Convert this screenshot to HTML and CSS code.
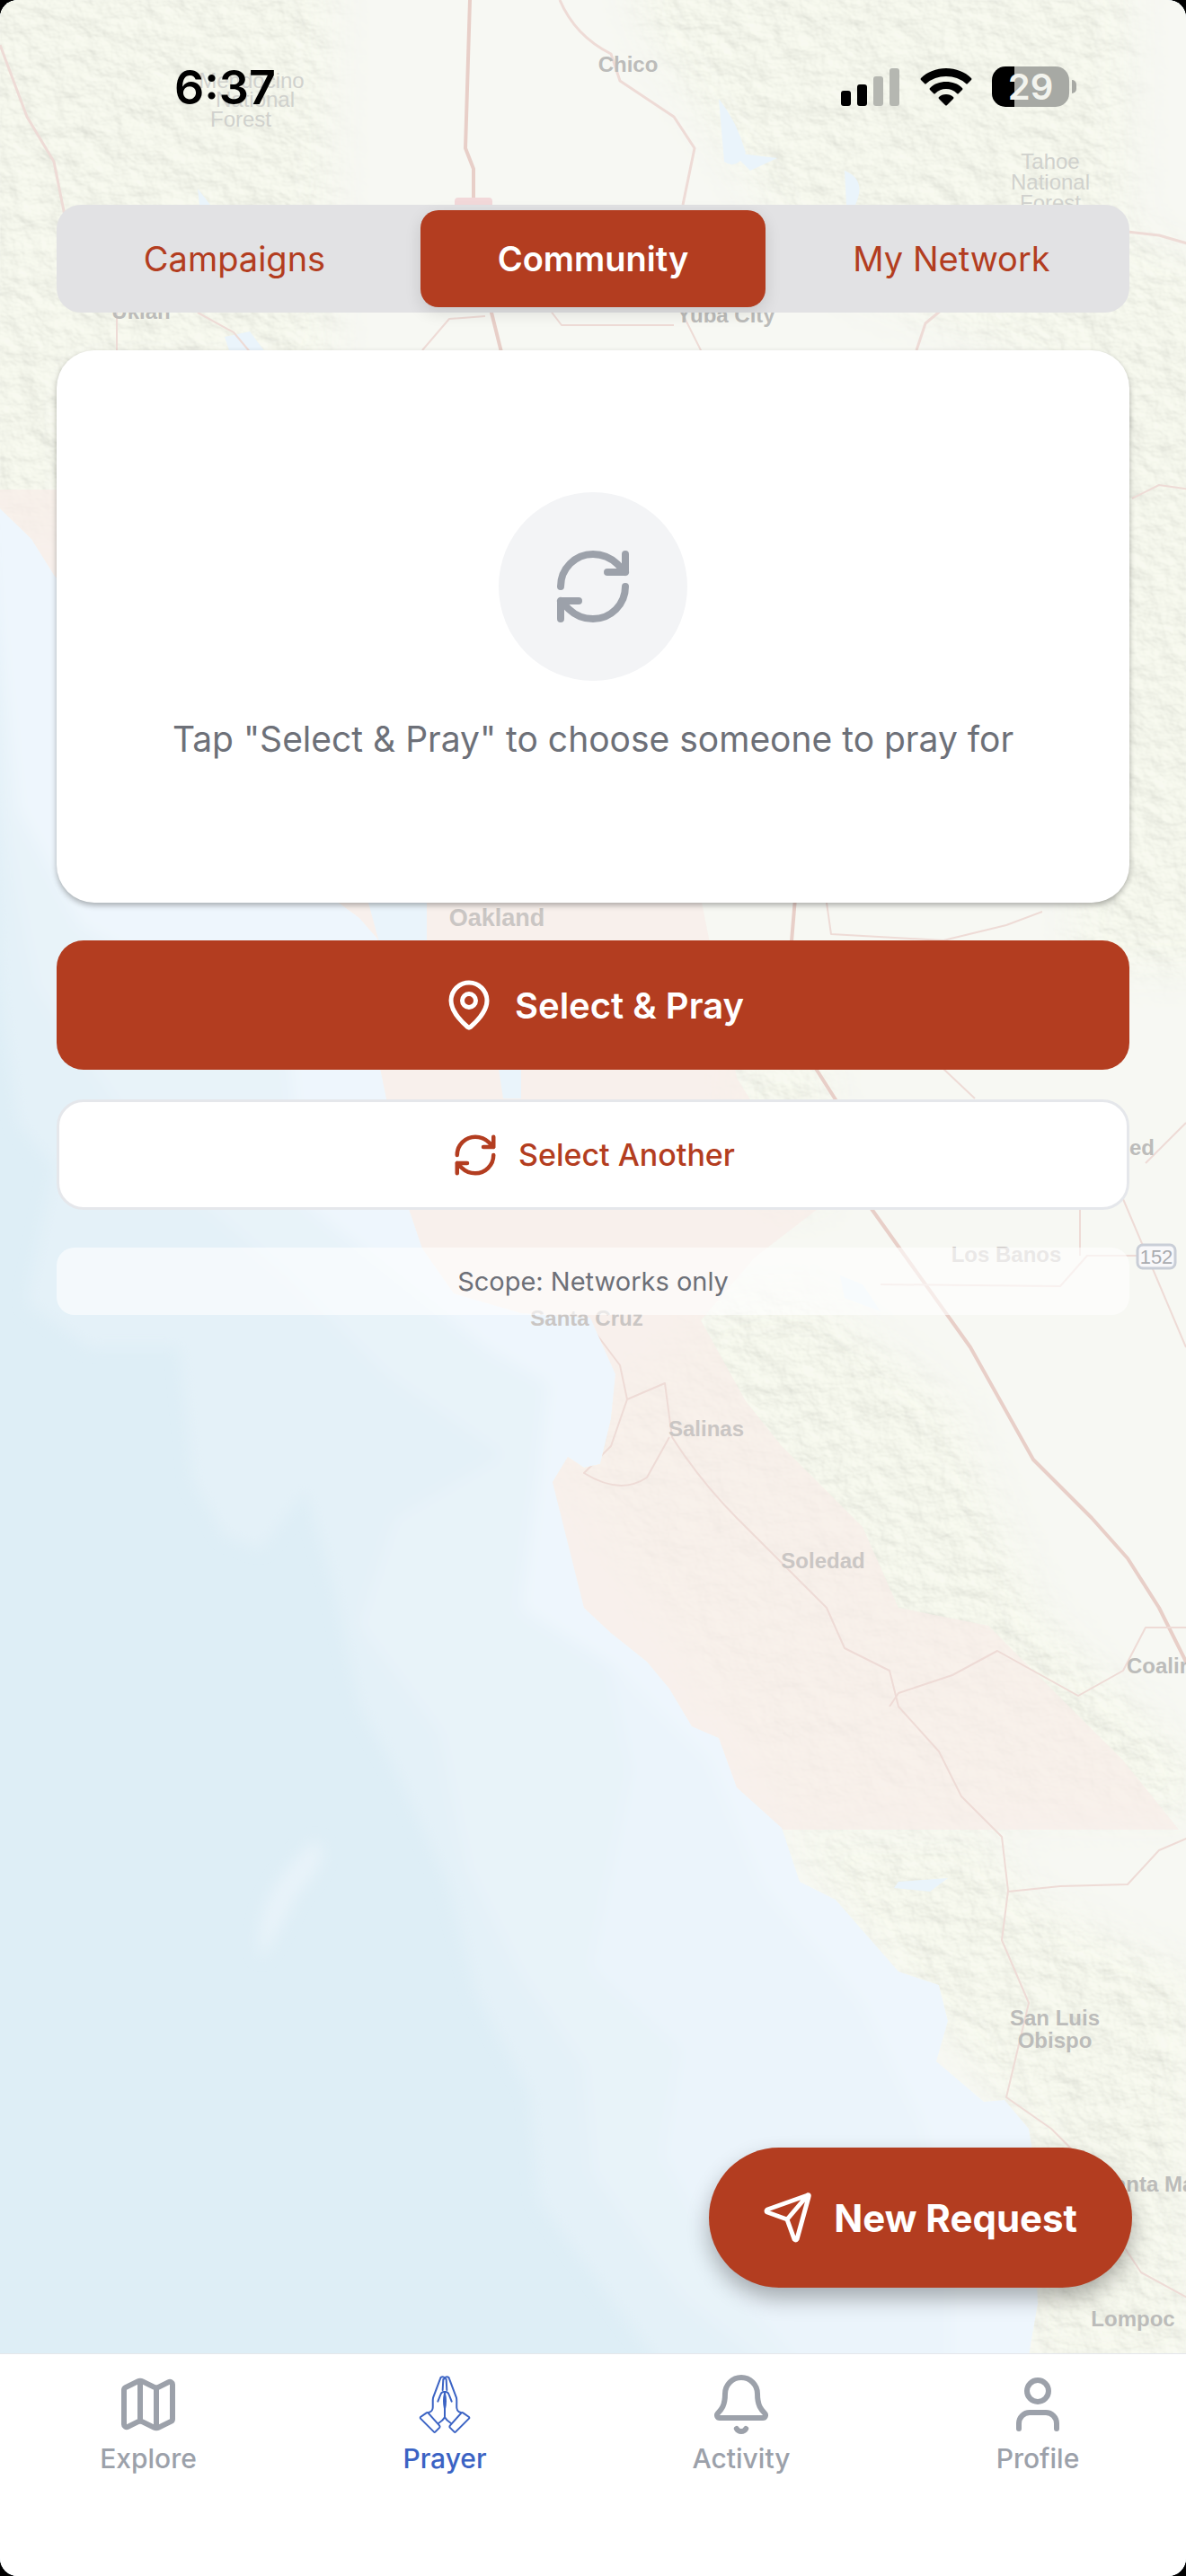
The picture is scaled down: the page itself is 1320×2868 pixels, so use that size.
FILE: index.html
```html
<!DOCTYPE html>
<html lang="en">
<head>
<meta charset="utf-8">
<meta name="viewport" content="width=device-width, initial-scale=1">
<title>Prayer – Community</title>
<link rel="stylesheet" href="styles.css">
</head>
<body>
<div class="app">
  <svg class="map" viewBox="0 0 1320 2868" preserveAspectRatio="xMidYMin slice" aria-hidden="true">
    <defs>
      <filter id="soft" x="-5%" y="-5%" width="110%" height="110%"><feGaussianBlur stdDeviation="8"/></filter>
      <filter id="relief" x="0" y="0" width="100%" height="100%">
        <feTurbulence type="fractalNoise" baseFrequency="0.03 0.04" numOctaves="4" seed="8"/>
        <feDiffuseLighting lighting-color="#f6f8ec" surfaceScale="3" diffuseConstant="1.15" result="lit"><feDistantLight azimuth="315" elevation="60"/></feDiffuseLighting>
        <feComposite in="lit" in2="SourceGraphic" operator="in"/>
      </filter>
      <filter id="feather" x="-5%" y="-5%" width="110%" height="110%"><feGaussianBlur stdDeviation="22"/></filter>
      <mask id="hills">
        <g fill="#fff" filter="url(#feather)">
          <path d="M-40-40H370V420H-40zM700-40H1260V260L1360 300V1080H1200L1180 420L900 300L720 40z"/>
          <path d="M-40 380H90V600H-40zM620 1620L800 1450L900 1440L1060 1560L1160 1800L1330 1960V2020H880z"/>
          <path d="M870 2040H1100L1140 2110L1330 2200V2640H1140L1150 2380L1000 2200z"/>
          <path d="M810 1180H920V1340H840z"/>
        </g>
      </mask>
      <clipPath id="land"><path d="M0-10H1330V2640H1142L1155 2565L1150 2400L1145 2370L1118 2338L1095 2340L1042 2295L1055 2250L1045 2210L1000 2195L930 2115L890 2095L870 2035L820 1990L800 1935L770 1922L745 1880L720 1850L680 1818L650 1790L640 1750L625 1690L615 1650L632 1622L650 1634L668 1630L680 1580L685 1530L657 1467L580 1462L505 1440L470 1390L455 1346L430 1223L415 1150L420 1045L400 1022L370 1000L60 640L35 600L0 566z"/></clipPath>
    </defs>
    <rect width="1320" height="2868" fill="#deeef6"/>
    <g filter="url(#soft)">
      <path fill="#e4f1f8" d="M-20 500L0 1100L20 1250L60 1300L30 1450L100 1500L200 1500L215 1650L250 1710L290 1725L340 1660L370 1760L400 1900L440 1970L500 2100L530 2220L590 2330L600 2450L680 2560L740 2640H1200V500z"/>
      <path fill="#e8f3f9" d="M-20 500L0 900L40 1100L180 1300L320 1420L430 1530L560 1620L440 1690L400 1810L490 1930L520 2080L580 2200L650 2300L660 2420L760 2560L860 2640H1200V500z"/>
      <path fill="#ebf4fb" d="M680 1860L705 1970L660 2190L760 2280L740 2400L830 2560L900 2640H1200V2100L800 1860z"/>
      <path fill="#eef6fd" d="M-20 520L20 900L90 1030L320 1160L340 1340L540 1500L610 1540L600 1640L580 1790L690 1860L790 1960L850 2100L960 2230L1030 2370L1060 2520L1060 2640H1200V500z"/>
      <path fill="#e8f3f9" d="M290 2180Q280 2110 350 2050Q375 2060 330 2110Q300 2170 290 2180z"/>
    </g>
    <g clip-path="url(#land)">
      <rect width="1320" height="2640" fill="#f7f8f3"/>
      <g mask="url(#hills)"><rect width="1320" height="2640" fill="#f1f3ea"/><g opacity=".5"><rect width="1320" height="2640" fill="#fff" filter="url(#relief)"/></g></g>
      <path fill="#f8ede9" fill-opacity=".72" d="M-10 545L100 545V700H-10zM350 1000H780L820 1200L910 1346L840 1400L780 1470L830 1560L870 1610L960 1700L1000 1790L1100 1810L1150 1860L1250 1960L1312 2037H860L600 1800V1560L350 1400z"/>
      <g fill="#eaf4fb">
        <path d="M410 1005H475V1060H425zM555 1190h25v33h-20zM800 110q20 25 30 60q-10 20-24 10zM815 170l50 6l-30 14zM220 530l14 40h-16zM935 1420l25 10l20 30l-40-15zM950 500l14 40h-14zM1000 2095l55-4l-20 15l-40-4zM250 375l28-6l18 24h-40zM220 210l14 18h-12zM940 190q25 10 12 38h-10z"/>
      </g>
      <g fill="none" stroke="#eedbd6" stroke-width="2" stroke-linejoin="round">
        <path stroke="#e8cfc8" stroke-width="4" d="M523 0L518 165L527 188V240M545 340L560 400M885 1000L880 1060M905 1185L940 1240L970 1346L1010 1402L1080 1500L1150 1625L1215 1690L1255 1735L1290 1790L1325 1860"/>
        <path stroke-width="3" d="M623 0Q640 40 680 60L690 90L750 130L773 165L760 228M0 50L30 130L60 180L72 240M1255 258L1290 262L1325 272M1020 390L1030 360L1060 335"/>
        <path d="M130 345V400M220 348L260 370L285 400M470 390L500 355L540 352M612 345L625 362L750 362M760 350L785 400M1260 555L1290 540L1325 545M920 1005L925 1040L1050 1047L1120 1030L1160 1015M1050 1190L1085 1223"/>
        <path d="M650 1467L690 1520L698 1558L740 1540L748 1600Q780 1650 820 1690L870 1740L920 1790L940 1835L990 1860L1000 1900L1045 1950L1070 2000L1115 2045L1122 2105L1115 2160L1145 2230L1120 2335L1170 2370L1200 2400M698 1558L680 1610L650 1640Q690 1665 720 1645L745 1600M1250 2500L1270 2530L1325 2560"/>
        <path d="M1122 2106L1180 2100L1255 2098L1290 2060L1325 2045M990 1900L1000 1885L1060 1865L1110 1838L1200 1888L1250 1860L1275 1812H1325M980 1430L1180 1432L1210 1398H1265M1202 1346V1398M1250 1335L1320 1500M1275 1295L1320 1250"/>
      </g>
      <rect x="506" y="220" width="42" height="20" rx="4" fill="#f2d8d9"/>
    </g>
    <rect x="1266" y="1386" width="42" height="26" rx="6" fill="#f8f8fa" stroke="#c9ced7" stroke-width="3"/>
    <g class="map-labels">
      <text x="699" y="80" text-anchor="middle">Chico</text>
      <g class="map-labels-faint" text-anchor="middle">
        <text x="280" y="98">Mendocino</text><text x="284" y="119">National</text><text x="268" y="141">Forest</text>
        <text x="1169" y="188">Tahoe</text><text x="1169" y="211">National</text><text x="1169" y="234">Forest</text>
      </g>
      <g class="map-labels-light" text-anchor="middle">
        <text x="553" y="1031" class="map-city">Oakland</text><text x="1120" y="1405">Los Banos</text><text x="1287" y="1407" class="map-shield">152</text>
        <text x="786" y="1599">Salinas</text><text x="916" y="1746">Soledad</text>
        <text x="653" y="1476">Santa Cruz</text>
      </g>
      <text x="157" y="355" text-anchor="middle">Ukiah</text>
      <text x="808" y="359" text-anchor="middle">Yuba City</text>
      <text x="1285" y="1286" text-anchor="end">Merced</text>
      <text x="1254" y="1863">Coalinga</text>
      <text x="1174" y="2255" text-anchor="middle">San Luis</text>
      <text x="1174" y="2280" text-anchor="middle">Obispo</text>
      <text x="1224" y="2440">Santa Maria</text>
      <text x="1261" y="2590" text-anchor="middle">Lompoc</text>
    </g>
  </svg>

  <header class="status">
    <time class="clock">6:37</time>
    <div class="indicators">
      <svg width="66" height="42" viewBox="0 0 66 42" aria-label="Signal"><rect y="25" width="11" height="17" rx="3"/><rect x="18" y="18" width="11" height="24" rx="3"/><g fill="#b5b7b1"><rect x="36" y="9" width="11" height="33" rx="3"/><rect x="54" width="11" height="42" rx="3"/></g></svg>
      <svg width="58" height="42" viewBox="0 0 58 42" aria-label="Wi-Fi"><path d="M29 0C18 0 8 4 1 11Q0 12 1 13L5 17Q6 18 7 17Q16 9 29 9T51 17Q52 18 53 17L57 13Q58 12 57 11C50 4 40 0 29 0zM29 15C22 15 16 17 11 22Q10 23 11 24L15 28Q16 29 17 28Q22 23 29 23T41 28Q42 29 43 28L47 24Q48 23 47 22C42 17 36 15 29 15zM29 29Q24 29 21 32Q20 33 21 34L28 41Q29 42 30 41L37 34Q38 33 37 32Q34 29 29 29z"/></svg>
      <div class="battery"><span class="battery-level">29</span></div>
    </div>
  </header>

  <main class="content">
    <div class="tabs" role="tablist">
      <button class="tab" type="button" role="tab" aria-selected="false">Campaigns</button>
      <button class="tab tab-active" type="button" role="tab" aria-selected="true">Community</button>
      <button class="tab" type="button" role="tab" aria-selected="false">My Network</button>
    </div>

    <section class="card">
      <div class="card-icon">
        <svg class="icon" width="96" height="96" viewBox="0 0 24 24"><path d="M3 12a9 9 0 0 1 9-9 9.750 9.750 0 0 1 6.740 2.740L21 8M21 3v5h-5M21 12a9 9 0 0 1-9 9 9.750 9.750 0 0 1-6.740-2.740L3 16M8 16H3v5"/></svg>
      </div>
      <p class="card-text">Tap "Select &amp; Pray" to choose someone to pray for</p>
    </section>

    <button class="button button-primary" type="button">
      <svg class="icon" width="60" height="60" viewBox="0 0 24 24"><path d="M20 10c0 4.993-5.539 10.193-7.399 11.799a1 1 0 0 1-1.202 0C9.539 20.193 4 14.993 4 10a8 8 0 0 1 16 0"/><circle cx="12" cy="10" r="3"/></svg>
      Select &amp; Pray
    </button>
    <button class="button button-secondary" type="button">
      <svg class="icon" width="54" height="54" viewBox="0 0 24 24"><path d="M3 12a9 9 0 0 1 9-9 9.750 9.750 0 0 1 6.740 2.740L21 8M21 3v5h-5M21 12a9 9 0 0 1-9 9 9.750 9.750 0 0 1-6.740-2.740L3 16M8 16H3v5"/></svg>
      Select Another
    </button>
    <p class="scope">Scope: Networks only</p>
  </main>

  <div class="bottom">
    <button class="fab" type="button">
      <svg class="icon" width="54" height="58" viewBox="0 0 54 58" stroke-width="5"><path d="M49 4L4 20Q2 22 4 23L26 31L34 53Q36 55 37 53L50 6Q51 3 49 4zL26 31"/></svg>
      New Request
    </button>
    <nav class="nav">
      <a class="nav-item" href="#explore">
        <svg class="icon" width="72" height="72" viewBox="0 0 24 24"><path d="M14.106 5.553a2 2 0 0 0 1.788 0l3.659-1.830A1 1 0 0 1 21 4.619v12.764a1 1 0 0 1-.553.894l-4.553 2.277a2 2 0 0 1-1.788 0l-4.212-2.106a2 2 0 0 0-1.788 0l-3.659 1.830A1 1 0 0 1 3 19.381V6.618a1 1 0 0 1 .553-.894l4.553-2.277a2 2 0 0 1 1.788 0zM15 5.764v15M9 3.236v15"/></svg>
        Explore
      </a>
      <a class="nav-item nav-active" href="#prayer" aria-current="page">
        <svg class="icon" width="72" height="72" viewBox="60 62 216 216" stroke-width="6">
          <g id="hand"><path d="M168 84C166 76 155 76 153 84L129 148C127 156 129 170 128 182C127 190 122 195 114 197M163 86L161 122M145 160L154 137Q158 126 168 128M168 134Q162 158 168 184M168 213Q162 224 147 233M107 198L87 212Q85 215 87 217L132 262Q134 264 136 262L151 247Q153 244 150 240L113 199Q110 196 107 198z"/></g>
          <use href="#hand" transform="matrix(-1 0 0 1 336 0)"/>
          <path d="M168 128V213"/>
        </svg>
        Prayer
      </a>
      <a class="nav-item" href="#activity">
        <svg class="icon" width="72" height="72" viewBox="0 0 24 24"><path d="M10.268 21a2 2 0 0 0 3.464 0M3.262 15.326A1 1 0 0 0 4 17h16a1 1 0 0 0 .740-1.673C19.410 13.956 18 12.499 18 8A6 6 0 0 0 6 8c0 4.499-1.411 5.956-2.738 7.326"/></svg>
        Activity
      </a>
      <a class="nav-item" href="#profile">
        <svg class="icon" width="72" height="72" viewBox="0 0 24 24"><path d="M19 21v-2a4 4 0 0 0-4-4H9a4 4 0 0 0-4 4v2"/><circle cx="12" cy="7" r="4"/></svg>
        Profile
      </a>
    </nav>
  </div>
</div>
</body>
</html>
```
FILE: styles.css
```css
:root {
  --brand: #b33d20;
  --gray: #9ca1aa;
  --text-muted: #6d7078;
  --gutter: 63px;
}

* { box-sizing: border-box; }

body {
  margin: 0;
  background: #000;
  font-family: Inter, "Liberation Sans", sans-serif;
}

button {
  border: 0;
  font: inherit;
  cursor: pointer;
}

.app {
  position: relative;
  display: flex;
  flex-direction: column;
  min-height: 100vh;
  overflow: hidden;
  border-radius: 20px;
  background: #deeef6;
}

.map {
  position: absolute;
  inset: 0;
  width: 100%;
  height: 100%;
}

.map-labels {
  font: bold 24px "Liberation Sans", sans-serif;
  fill: #bcbcba;
}

.map-labels-faint {
  font-weight: 400;
  fill: #d0d1cd;
}

.map-labels-light {
  fill: #cac6c4;
}

.map-labels .map-city {
  font-size: 27px;
}

.map-labels .map-shield {
  font-size: 22px;
  font-weight: 400;
  fill: #a9abb0;
}

.icon {
  flex: none;
  fill: none;
  stroke: currentColor;
  stroke-linecap: round;
  stroke-linejoin: round;
}

.icon:not([stroke-width]) { stroke-width: 2; }

.status, .content, .bottom { position: relative; }

.status {
  display: flex;
  justify-content: space-between;
  align-items: flex-start;
  height: 228px;
  padding: 66px 130px 0 194px;
}

.clock {
  font-size: 52px;
  font-weight: 600;
  line-height: 64px;
}

.indicators {
  display: flex;
  align-items: center;
  gap: 22px;
  padding-top: 8px;
}

.battery {
  position: relative;
  width: 86px;
  height: 45px;
  border-radius: 15px;
  background: linear-gradient(90deg, #000 25px, #a7a9a4 25px);
}

.battery::after {
  content: "";
  position: absolute;
  top: 15px;
  right: -8px;
  width: 5px;
  height: 15px;
  border-radius: 0 8px 8px 0;
  background: #a7a9a4;
}

.battery-level {
  display: block;
  color: #f3f4ee;
  font-size: 40px;
  font-weight: 600;
  line-height: 45px;
  text-align: center;
}

.content {
  display: flex;
  flex: 1;
  flex-direction: column;
  padding: 0 var(--gutter);
}

.tabs {
  display: grid;
  grid-template-columns: repeat(3, 1fr);
  gap: 15px;
  height: 120px;
  padding: 6px;
  border-radius: 27px;
  background: #e2e2e4;
}

.tab {
  padding: 0;
  border-radius: 20px;
  background: none;
  color: var(--brand);
  font-size: 38px;
}

.tab-active {
  background: var(--brand);
  color: #fff;
  font-weight: 600;
  box-shadow: 0 6px 18px rgba(0, 0, 0, .12);
}

.card {
  display: flex;
  flex-direction: column;
  align-items: center;
  justify-content: center;
  gap: 39px;
  height: 615px;
  margin-top: 42px;
  border-radius: 42px;
  background: #fff;
  box-shadow: 0 3px 6px rgba(0, 0, 0, .3);
}

.card-icon {
  display: grid;
  place-items: center;
  width: 210px;
  height: 210px;
  border-radius: 50%;
  background: #f3f4f6;
  color: var(--gray);
}

.card-text {
  margin: 0;
  color: var(--text-muted);
  font-size: 39px;
  line-height: 51px;
}

.button {
  display: flex;
  align-items: center;
  justify-content: center;
  border-radius: 30px;
}

.button-primary {
  gap: 21px;
  height: 144px;
  margin-top: 42px;
  background: var(--brand);
  color: #fff;
  font-size: 40px;
  font-weight: 600;
}

.button-secondary {
  gap: 21px;
  height: 123px;
  margin-top: 33px;
  border: 3px solid #e5e7eb;
  background: #fff;
  color: var(--brand);
  font-size: 34px;
  font-weight: 500;
}

.scope {
  margin: 42px 0;
  padding: 18px;
  border-radius: 20px;
  background: rgba(255, 255, 255, .6);
  color: var(--text-muted);
  font-size: 29px;
  line-height: 39px;
  text-align: center;
}

.fab {
  position: absolute;
  right: 60px;
  bottom: 321px;
  display: flex;
  align-items: center;
  gap: 24px;
  height: 156px;
  padding: 0 61px;
  border-radius: 78px;
  background: var(--brand);
  color: #fff;
  font-size: 42px;
  font-weight: 700;
  box-shadow: 0 12px 24px rgba(0, 0, 0, .3);
}

.nav {
  display: grid;
  grid-template-columns: repeat(4, 1fr);
  height: 248px;
  border-top: 1px solid #e5e7eb;
  background: #fff;
}

.nav-item {
  display: flex;
  flex-direction: column;
  align-items: center;
  gap: 6px;
  padding-top: 20px;
  color: var(--gray);
  font-size: 30px;
  font-weight: 500;
  line-height: 36px;
  text-decoration: none;
}

.nav-active { color: #3b63c4; }
```
